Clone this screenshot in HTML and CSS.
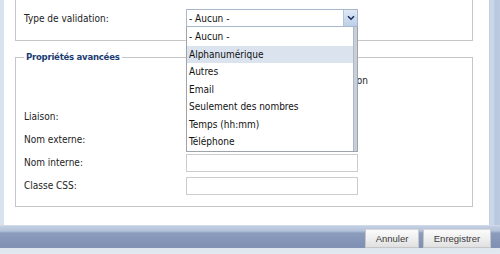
FILE: index.html
```html
<!DOCTYPE html>
<html lang="fr">
<head>
<meta charset="utf-8">
<title>Validation</title>
<link rel="stylesheet" href="styles.css">
</head>
<body>
<div class="window">
  <div class="frame">
    <div class="content">
      <fieldset class="group group-basic">
        <div class="row">
          <label class="label">Type de validation:</label>
          <div class="select">
            <span class="select-value">- Aucun -</span>
            <span class="select-button">
              <svg width="8" height="6" viewBox="0 0 8 6"><polyline points="1,1.2 4,4.2 7,1.2" fill="none" stroke="#1b2e5c" stroke-width="1.6"/></svg>
            </span>
            <ul class="options">
              <li class="option">- Aucun -</li>
              <li class="option is-active">Alphanumérique</li>
              <li class="option">Autres</li>
              <li class="option">Email</li>
              <li class="option">Seulement des nombres</li>
              <li class="option">Temps (hh:mm)</li>
              <li class="option">Téléphone</li>
              <li class="scrollbar"></li>
            </ul>
          </div>
        </div>
      </fieldset>
      <fieldset class="group group-advanced">
        <legend class="legend">Propriétés avancées</legend>
        <div class="row row-check">
          <span class="label"></span>
          <span class="check-text">Inclure dans la validation</span>
        </div>
        <div class="row"><label class="label">Liaison:</label><span class="input"></span></div>
        <div class="row"><label class="label">Nom externe:</label><span class="input"></span></div>
        <div class="row"><label class="label">Nom interne:</label><span class="input"></span></div>
        <div class="row"><label class="label">Classe CSS:</label><span class="input"></span></div>
      </fieldset>
    </div>
    <div class="side"></div>
  </div>
  <div class="footer">
    <button class="btn btn-cancel">Annuler</button>
    <button class="btn btn-save">Enregistrer</button>
  </div>
</div>
</body>
</html>
```
FILE: styles.css
```css
html, body {
  margin: 0;
  padding: 0;
  width: 500px;
  height: 254px;
  overflow: hidden;
  background: #ffffff;
}
body {
  font-family: "DejaVu Sans Condensed", "DejaVu Sans", sans-serif;
  font-size: 10px;
  color: #222222;
}
.window {
  display: flex;
  flex-direction: column;
  height: 254px;
}
.frame {
  display: flex;
  height: 225px;
  border-left: 4px solid #d8e3f0;
}
.content {
  flex: 1;
  padding: 0 16px 0 11px;
  background: #ffffff;
}
.side {
  width: 11px;
  background: linear-gradient(to right, #b9c8de 0, #cbd8ea 1px, #c8d5e8 5px, #b6c6de 6px, #bccbe1 100%);
}
.group {
  margin: 0;
  min-width: 0;
  border: 1px solid #c6c6c6;
  padding: 0 8px;
}
.group-basic {
  border-top: 0;
  padding-top: 9px;
  padding-bottom: 13px;
}
.group-advanced {
  margin-top: 9px;
  padding-top: 5px;
  padding-bottom: 9px;
}
.legend {
  padding: 0 2px;
  font-weight: bold;
  font-size: 9.5px;
  letter-spacing: -0.25px;
  color: #1d3d73;
  line-height: 14px;
}
.row {
  display: flex;
  align-items: center;
  height: 23px;
}
.group-basic .row {
  height: 18px;
}
.row-check {
  margin-bottom: 13px;
}
.label {
  width: 162px;
  flex: none;
}
.check-text {
  width: 182px;
  text-align: right;
  white-space: nowrap;
  color: #222;
}
.input {
  box-sizing: border-box;
  width: 172px;
  height: 18px;
  border: 1px solid #cdcdcd;
  background: #fff;
}
.select {
  position: relative;
  box-sizing: border-box;
  width: 172px;
  height: 18px;
  border: 1px solid #a8b7cc;
  display: flex;
  align-items: center;
  background: #fff;
}
.select-value {
  flex: 1;
  padding-left: 2px;
  color: #111;
}
.select-button {
  width: 13px;
  height: 16px;
  display: flex;
  align-items: center;
  justify-content: center;
  background: linear-gradient(#dfe8f5, #bccfe7);
  border-left: 1px solid #b3c3d9;
}
.options {
  position: absolute;
  left: -1px;
  top: calc(100% + 1px);
  z-index: 5;
  box-sizing: border-box;
  width: 172px;
  margin: 0;
  padding: 1px 4px 0 0;
  list-style: none;
  background: #fff;
  border: 1px solid #9fa3aa;
  border-top: 0;
}
.option {
  height: 17.5px;
  line-height: 17.5px;
  padding-left: 2px;
  color: #111;
  white-space: nowrap;
}
.option.is-active {
  background: #dbe3ef;
}
.scrollbar {
  position: absolute;
  top: 0;
  right: 0;
  bottom: 0;
  width: 4px;
  background: #c9cfd9;
  border-left: 1px solid #b0b7c4;
  box-sizing: border-box;
}
.footer {
  flex: 1;
  display: flex;
  justify-content: flex-end;
  align-items: flex-start;
  gap: 4px;
  padding: 4px 9px 0 0;
  background: linear-gradient(#dde4ee 0, #c3cfe2 1px, #b3c1da 6px, #8c9cbd 8px, #7e90b4 22px, #8394b6 23px, #dfe6ef 23px, #e3e9f1 100%);
}
.btn {
  box-sizing: border-box;
  height: 19px;
  margin: 0;
  padding: 0;
  border: 1px solid #c4c6ca;
  border-top-color: #d8d9dc;
  background: linear-gradient(#fbfbfb, #ececec 60%, #e0e0e0);
  font-family: "Liberation Sans", Arial, sans-serif;
  font-size: 9.5px;
  color: #3a3a3a;
}
.btn-cancel {
  width: 54px;
}
.btn-save {
  width: 68px;
}
```
